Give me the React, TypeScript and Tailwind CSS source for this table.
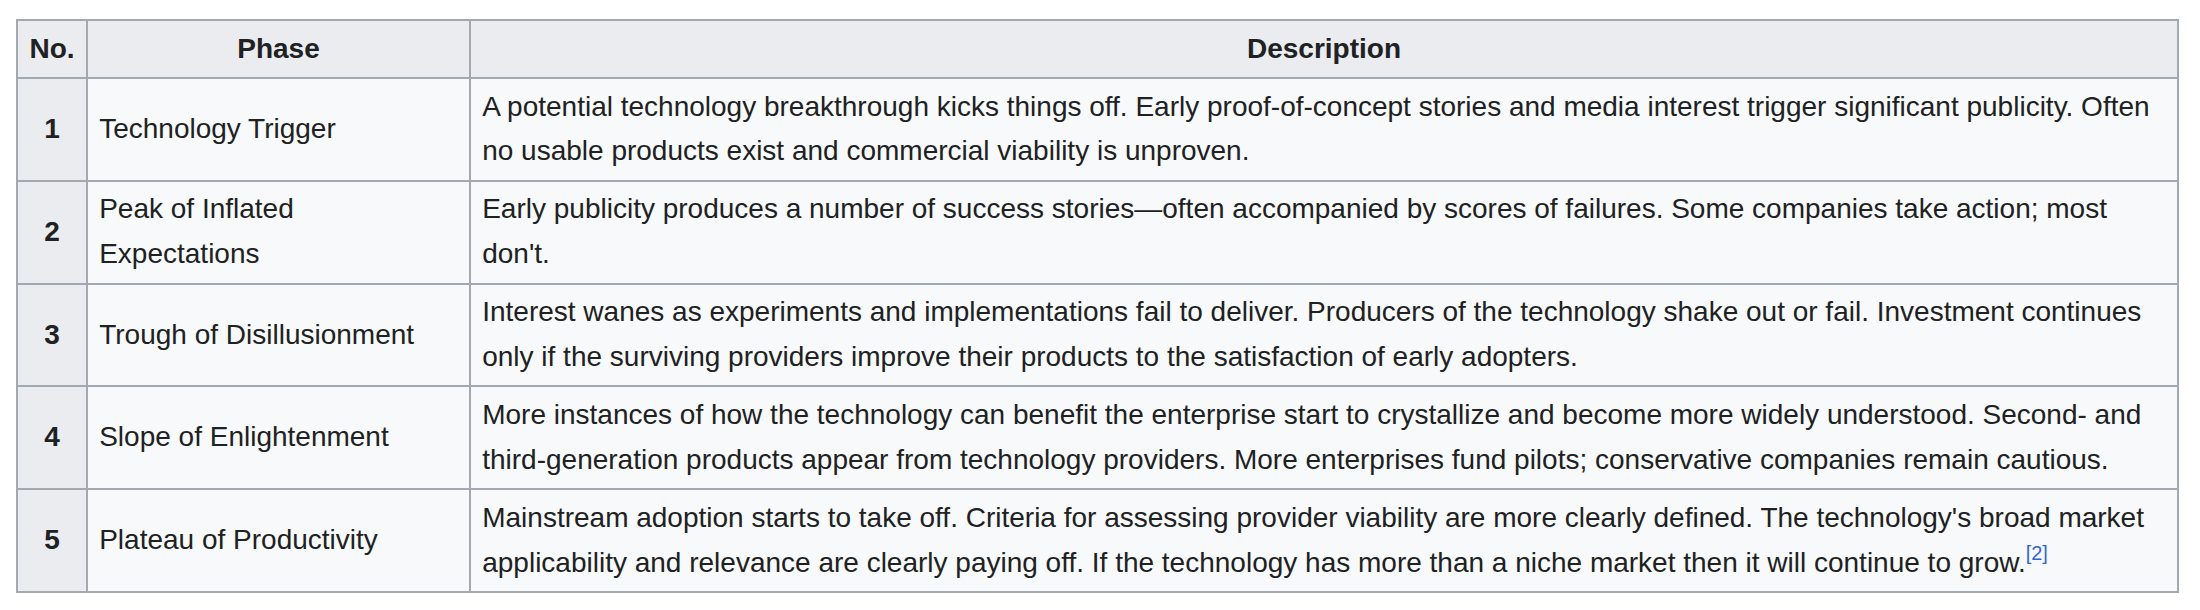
import React from "react";

const rows: { no: string; phase: React.ReactNode; desc: React.ReactNode }[] = [
  {
    no: "1",
    phase: "Technology Trigger",
    desc: (
      <>
        A potential technology breakthrough kicks things off. Early proof-of-concept stories and media interest trigger significant publicity. Often
        <br />
        no usable products exist and commercial viability is unproven.
      </>
    ),
  },
  {
    no: "2",
    phase: (
      <>
        Peak of Inflated
        <br />
        Expectations
      </>
    ),
    desc: (
      <>
        Early publicity produces a number of success stories—often accompanied by scores of failures. Some companies take action; most
        <br />
        don't.
      </>
    ),
  },
  {
    no: "3",
    phase: "Trough of Disillusionment",
    desc: (
      <>
        Interest wanes as experiments and implementations fail to deliver. Producers of the technology shake out or fail. Investment continues
        <br />
        only if the surviving providers improve their products to the satisfaction of early adopters.
      </>
    ),
  },
  {
    no: "4",
    phase: "Slope of Enlightenment",
    desc: (
      <>
        More instances of how the technology can benefit the enterprise start to crystallize and become more widely understood. Second- and
        <br />
        third-generation products appear from technology providers. More enterprises fund pilots; conservative companies remain cautious.
      </>
    ),
  },
  {
    no: "5",
    phase: "Plateau of Productivity",
    desc: (
      <>
        Mainstream adoption starts to take off. Criteria for assessing provider viability are more clearly defined. The technology's broad market
        <br />
        applicability and relevance are clearly paying off. If the technology has more than a niche market then it will continue to grow.
        <sup className="text-[20px] leading-none align-baseline relative top-[-12px] text-[#3366cc]">[2]</sup>
      </>
    ),
  },
];

export default function App() {
  return (
    <div
      className="bg-white pl-[16px] pt-[19px] text-[28px] leading-[1.6] text-[#202122]"
      style={{ fontFamily: '"Liberation Sans", Arial, Helvetica, sans-serif' }}
    >
      <table className="table-fixed border-separate border-spacing-0 border-l-2 border-t-2 border-[#a2a9b1] w-[2163px]">
        <colgroup>
          <col className="w-[70px]" />
          <col className="w-[383px]" />
          <col className="w-[1708px]" />
        </colgroup>
        <thead>
          <tr>
            <th className="bg-[#eaecf0] border-r-2 border-b-2 border-[#a2a9b1] px-[11.2px] py-[5.6px] font-bold text-center align-middle">
              No.
            </th>
            <th className="bg-[#eaecf0] border-r-2 border-b-2 border-[#a2a9b1] px-[11.2px] py-[5.6px] font-bold text-center align-middle">
              Phase
            </th>
            <th className="bg-[#eaecf0] border-r-2 border-b-2 border-[#a2a9b1] px-[11.2px] py-[5.6px] font-bold text-center align-middle">
              Description
            </th>
          </tr>
        </thead>
        <tbody>
          {rows.map((r) => (
            <tr key={r.no}>
              <th className="bg-[#eaecf0] border-r-2 border-b-2 border-[#a2a9b1] px-[11.2px] py-[5.6px] font-bold text-center align-middle">
                {r.no}
              </th>
              <td className="bg-[#f8f9fa] border-r-2 border-b-2 border-[#a2a9b1] px-[11.2px] py-[5.6px] text-left align-middle">
                {r.phase}
              </td>
              <td className="bg-[#f8f9fa] border-r-2 border-b-2 border-[#a2a9b1] px-[11.2px] py-[5.6px] text-left align-middle">
                {r.desc}
              </td>
            </tr>
          ))}
        </tbody>
      </table>
    </div>
  );
}
